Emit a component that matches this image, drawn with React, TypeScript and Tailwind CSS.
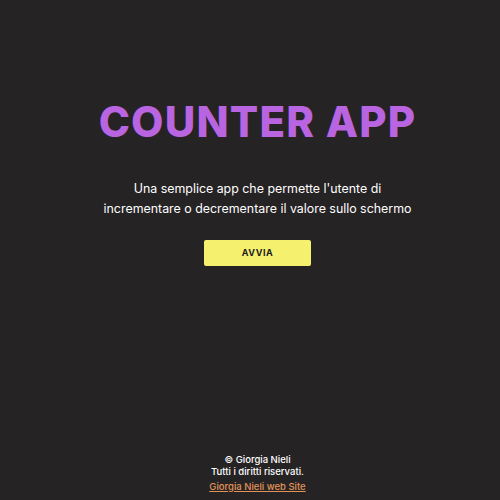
export default function App() {
  return (
    <div className="flex h-[500px] w-full flex-col items-center bg-[#262324] pl-[15px] text-white" style={{ fontFamily: "Inter, 'Liberation Sans', sans-serif" }}>
      <main className="flex flex-col items-center pt-[101px]">
        <h1 className="text-[42px] font-extrabold leading-none tracking-[1.2px] text-[#b964e0]">COUNTER APP</h1>
        <p className="mt-[36px] text-center text-[12.4px] leading-[20px] text-white">
          Una semplice app che permette l'utente di
          <br />
          incrementare o decrementare il valore sullo schermo
        </p>
        <button className="mt-[21px] h-[26px] w-[107px] rounded-[2px] bg-[#f6f06f] text-[9px] font-bold tracking-[0.5px] text-[#1d1b1c]">AVVIA</button>
      </main>
      <footer className="mt-auto mb-[7px] flex flex-col items-center text-[9.5px] leading-[12px] font-medium">
        <span>© Giorgia Nieli</span>
        <span>Tutti i diritti riservati.</span>
        <a href="#" className="mt-[3px] text-[#e0935a] underline">Giorgia Nieli web Site</a>
      </footer>
    </div>
  );
}
